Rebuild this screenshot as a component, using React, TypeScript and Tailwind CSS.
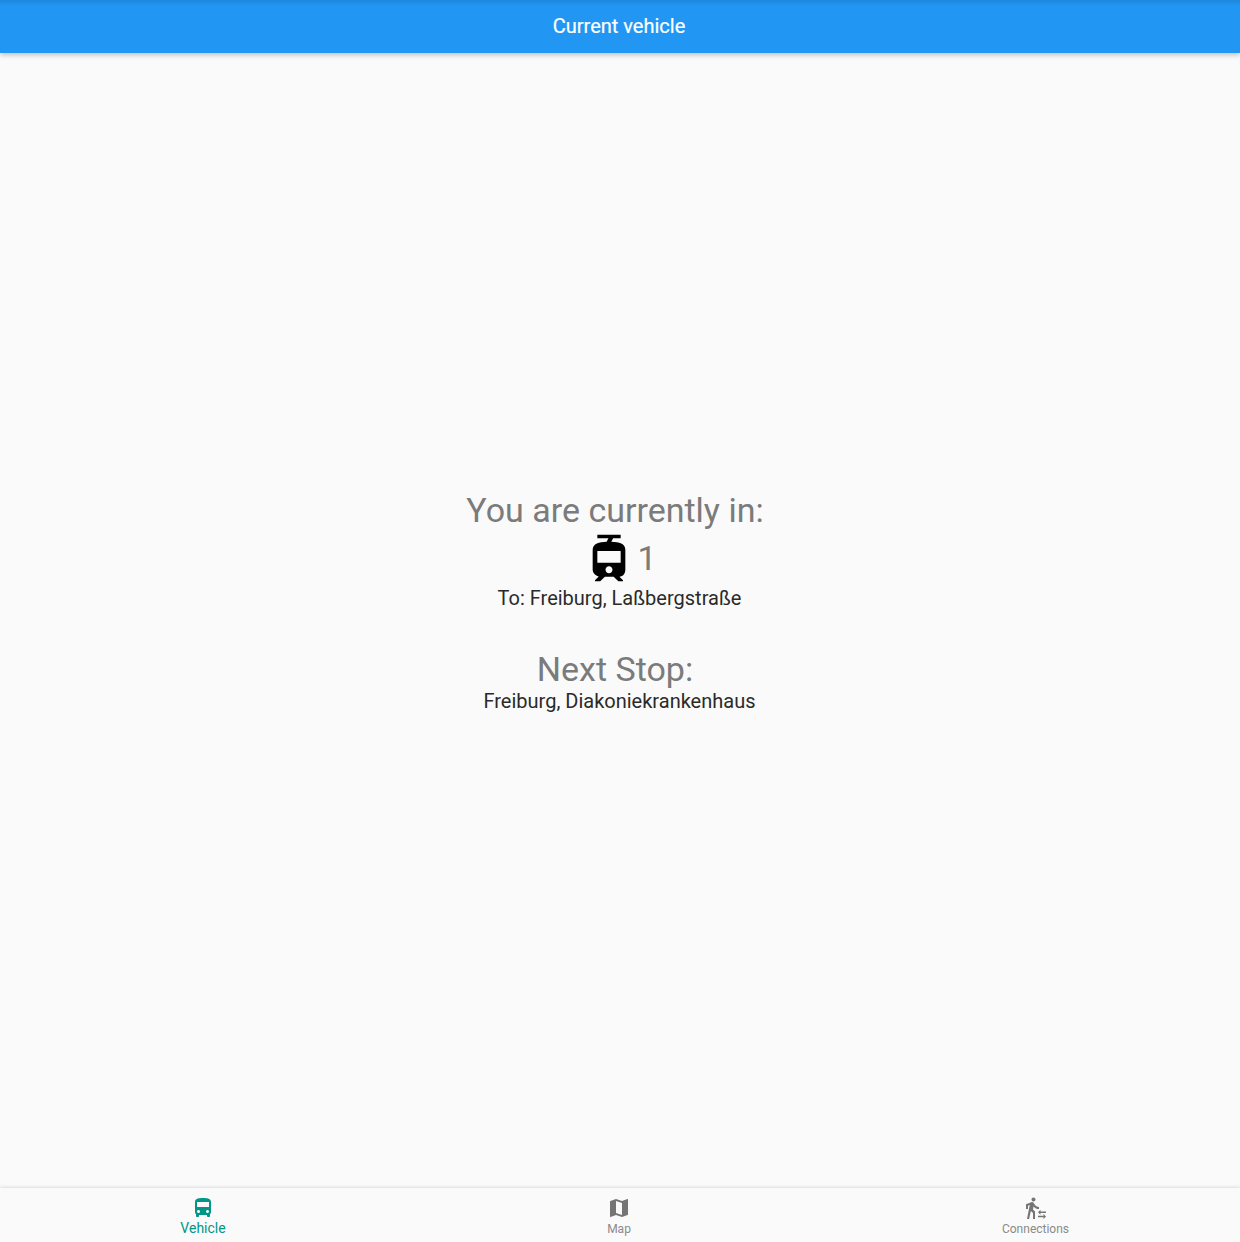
import { MdDirectionsBus, MdMap, MdTransferWithinAStation, MdTram } from "react-icons/md";

export default function App() {
  return (
    <div className="flex h-[1242px] w-full flex-col overflow-hidden bg-[#fafafa] font-['Roboto',sans-serif] antialiased">
      <header className="relative flex h-[53px] shrink-0 items-center justify-center bg-[#2196f3] pr-0.5 pb-0.5 shadow-[0_2px_5px_rgba(0,0,0,0.24)]">
        <div className="absolute inset-x-0 top-0 h-1.5 bg-linear-to-b from-black/10 to-transparent" />
        <h1 className="text-[20px] leading-6 font-normal text-white [-webkit-text-stroke:0.2px_white]">Current vehicle</h1>
      </header>
      <main className="flex grow flex-col items-center pt-[437px] pr-px">
        <p className="h-[40px] pr-[9px] text-[34px] leading-[40px] text-[#7b7b7b]">You are currently in:</p>
        <div className="flex h-[56px] items-center pr-px">
          <MdTram className="size-14 text-black" />
          <span className="text-[34px] leading-[40px] text-[#7b7b7b]">1</span>
        </div>
        <p className="text-[20px] leading-6 text-[#2a2a2a]">To: Freiburg, Laßbergstraße</p>
        <p className="mt-[39px] h-[40px] pr-[9px] text-[34px] leading-[40px] text-[#7b7b7b]">Next Stop:</p>
        <p className="text-[20px] leading-6 text-[#2a2a2a]">Freiburg, Diakoniekrankenhaus</p>
      </main>
      <nav className="flex h-[54px] shrink-0 bg-[#fafafa] shadow-[0_-1px_3px_rgba(0,0,0,0.12)]">
        <div className="flex w-[406px] flex-col items-center pt-2 text-[#009688]">
          <MdDirectionsBus className="size-6" />
          <span className="text-[14px] leading-4">Vehicle</span>
        </div>
        <div className="flex w-[426px] flex-col items-center pt-2 text-[#757575]">
          <MdMap className="size-6" />
          <span className="mt-px text-[12px] leading-4 text-[#8a8a8a]">Map</span>
        </div>
        <div className="flex w-[407px] flex-col items-center pt-2 text-[#757575]">
          <MdTransferWithinAStation className="size-6" />
          <span className="mt-px text-[12px] leading-4 text-[#8a8a8a]">Connections</span>
        </div>
      </nav>
    </div>
  );
}
